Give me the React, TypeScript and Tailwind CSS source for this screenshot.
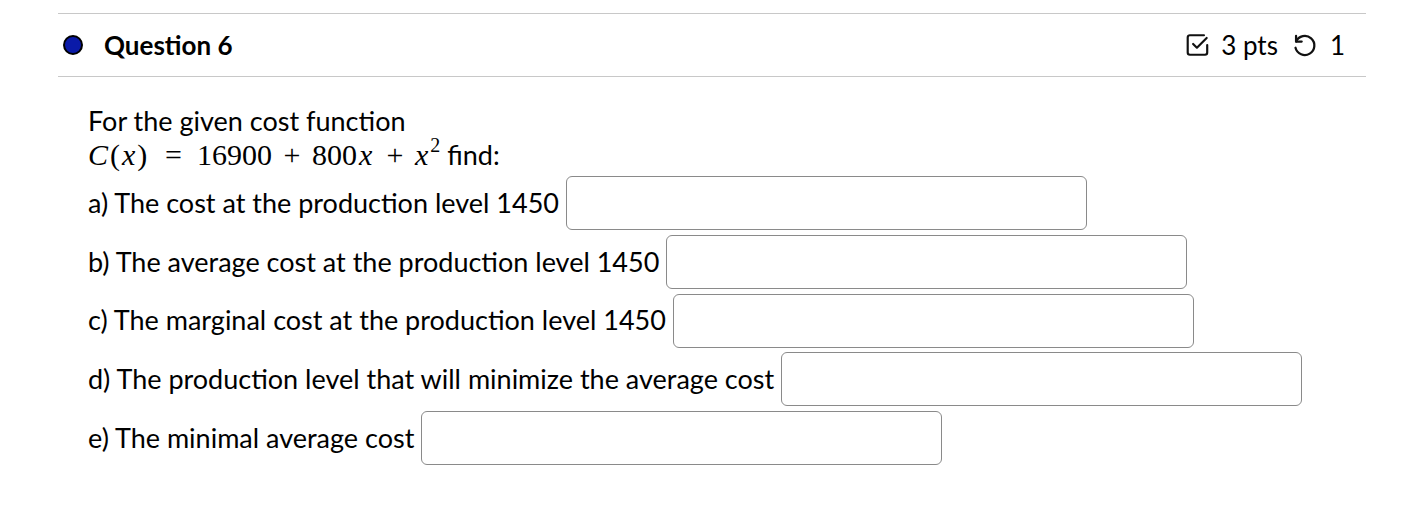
import React from "react";

const rows = [
  "a) The cost at the production level 1450",
  "b) The average cost at the production level 1450",
  "c) The marginal cost at the production level 1450",
  "d) The production level that will minimize the average cost",
  "e) The minimal average cost",
];

const serif = { fontFamily: "'Liberation Serif', 'DejaVu Serif', serif" };

function V({ children, className = "" }: { children: React.ReactNode; className?: string }) {
  return <em className={"italic not-italic-none " + className}>{children}</em>;
}

export default function App() {
  return (
    <div className="bg-white w-[1428px] h-[520px] pt-[13px] pl-[58px]" style={{ fontFamily: "Lato, 'Noto Sans', sans-serif" }}>
      <div className="w-[1308px]">
        <div className="h-[64px] border-t border-b border-[#c8c8c8] flex items-center justify-between pl-[5px] pr-[21px]">
          <div className="flex items-center">
            <span className="w-[20px] h-[20px] rounded-full bg-[#0a1aa8] border-[2px] border-black box-border" />
            <span className="ml-[21px] text-[26px] font-bold text-black">Question 6</span>
          </div>
          <div className="flex items-center text-[26px] text-black">
            <svg width="26" height="26" viewBox="0 0 24 24" fill="none" stroke="#111" strokeWidth="2" strokeLinecap="round" strokeLinejoin="round">
              <path d="M20.5 12v7a2 2 0 0 1-2 2h-14a2 2 0 0 1-2-2V5a2 2 0 0 1 2-2h13" />
              <path d="m7.5 11 3.5 3.5 9-9" />
            </svg>
            <span className="ml-[10px]">3 pts</span>
            <svg className="ml-[13px]" width="27" height="27" viewBox="0 0 24 24" fill="none" stroke="#111" strokeWidth="2" strokeLinecap="round" strokeLinejoin="round">
              <path d="M4.5 8.5A8.5 8.5 0 1 1 4 14" />
              <path d="M4.5 3.5v5h5" />
            </svg>
            <span className="ml-[12px]">1</span>
          </div>
        </div>
        <div className="pl-[30px] pt-[27px] text-[27px] text-black">
          <div className="h-[34px] leading-[34px]">For the given cost function</div>
          <div className="h-[34px] leading-[34px] flex items-baseline">
            <span className="flex items-baseline text-[30px] leading-[34px] text-black" style={serif}>
              <span className="inline-block w-[62px] tracking-[2px]">
                <V>C</V>(<V>x</V>)
              </span>
              <span className="inline-block w-[47px] text-center">=</span>
              <span className="inline-block w-[75px]">16900</span>
              <span className="inline-block w-[40px] text-center">+</span>
              <span className="inline-block w-[63px]">
                800<V className="ml-[2px]">x</V>
              </span>
              <span className="inline-block w-[40px] text-center">+</span>
              <span className="inline-block">
                <V>x</V>
                <span className="inline-block text-[20px] ml-[2px] relative top-[-13px] leading-none">2</span>
              </span>
            </span>
            <span className="ml-[7px]">find:</span>
          </div>
          <div className="mt-[4px] flex flex-col gap-[4.75px]">
            {rows.map((r) => (
              <div key={r} className="flex items-center">
                <span>{r}</span>
                <div className="ml-[7px] w-[521px] h-[54px] rounded-[6px] border border-[#8a8a8a] bg-white" />
              </div>
            ))}
          </div>
        </div>
      </div>
    </div>
  );
}
